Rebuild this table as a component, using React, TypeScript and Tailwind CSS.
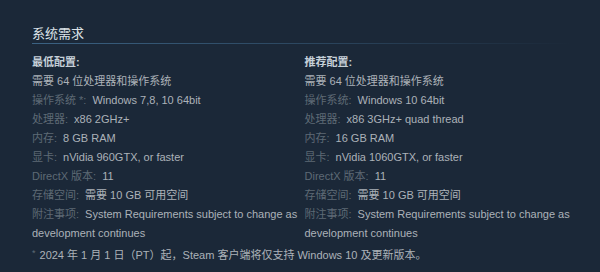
import React from "react";

const minReqs = [
  { label: "操作系统 *:", value: "Windows 7,8, 10 64bit" },
  { label: "处理器:", value: "x86 2GHz+" },
  { label: "内存:", value: "8 GB RAM" },
  { label: "显卡:", value: "nVidia 960GTX, or faster" },
  { label: "DirectX 版本:", value: "11" },
  { label: "存储空间:", value: "需要 10 GB 可用空间" },
  { label: "附注事项:", value: "System Requirements subject to change as development continues" },
];

const recReqs = [
  { label: "操作系统:", value: "Windows 10 64bit" },
  { label: "处理器:", value: "x86 3GHz+ quad thread" },
  { label: "内存:", value: "16 GB RAM" },
  { label: "显卡:", value: "nVidia 1060GTX, or faster" },
  { label: "DirectX 版本:", value: "11" },
  { label: "存储空间:", value: "需要 10 GB 可用空间" },
  { label: "附注事项:", value: "System Requirements subject to change as development continues" },
];

const ReqColumn = ({ title, rows }: { title: string; rows: { label: string; value: string }[] }) => (
  <div className="w-[268px]">
    <div className="font-semibold text-[#c6d0d8]">{title}</div>
    <div className="text-[#acb2b8]">需要 64 位处理器和操作系统</div>
    {rows.map((r) => (
      <div key={r.label} className="text-[#acb2b8]">
        <span className="pr-[6px] text-[#5e6a75]">{r.label}</span>
        {r.value}
      </div>
    ))}
  </div>
);

export default function App() {
  return (
    <div
      className="h-[272px] w-[600px] bg-[#1b2838] pl-[32px] pt-[24px]"
      style={{ fontFamily: '"Liberation Sans", "Noto Sans CJK SC", sans-serif' }}
    >
      <div className="w-[540px]">
        <h2 className="text-[13px] leading-[19px] text-[#dde3e8]">系统需求</h2>
        <div className="h-px bg-linear-to-r from-[#3b6283] via-[#2c4760] to-transparent" />
        <div className="mt-[9px] flex gap-[5px] text-[11px] leading-[19px]">
          <ReqColumn title="最低配置:" rows={minReqs} />
          <ReqColumn title="推荐配置:" rows={recReqs} />
        </div>
        <div className="mt-[3px] flex items-start text-[11px] leading-[19px] text-[#acb2b8]">
          <span className="mr-[4px] text-[9px] leading-[14px] text-[#5e6a75]">*</span>
          <span>2024 年 1 月 1 日（PT）起，Steam 客户端将仅支持 Windows 10 及更新版本。</span>
        </div>
      </div>
    </div>
  );
}
